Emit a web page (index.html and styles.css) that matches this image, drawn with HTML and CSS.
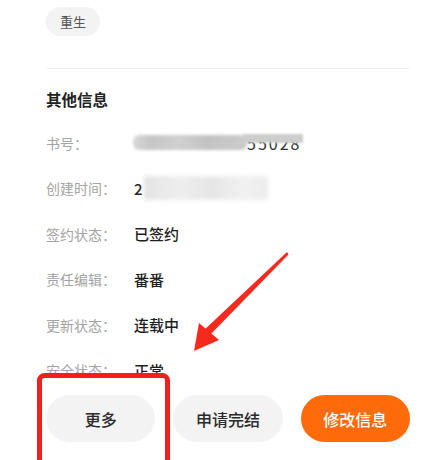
FILE: index.html
```html
<!DOCTYPE html>
<html lang="zh">
<head>
<meta charset="utf-8">
<link rel="stylesheet" href="styles.css">
</head>
<body>
<div class="page">
  <div class="tags"><span class="tag">重生</span></div>
  <div class="divider"></div>
  <h2 class="heading">其他信息</h2>
  <div class="list">
    <div class="row"><span class="label">书号：</span><span class="value blurred-id"><span class="blur-bar bar-id"></span><span class="id-tail">55028<span class="tail-cover"></span></span></span></div>
    <div class="row"><span class="label">创建时间：</span><span class="value">2<span class="blur-bar bar-date"></span></span></div>
    <div class="row"><span class="label">签约状态：</span><span class="value">已签约</span></div>
    <div class="row"><span class="label">责任编辑：</span><span class="value">番番</span></div>
    <div class="row"><span class="label">更新状态：</span><span class="value">连载中</span></div>
    <div class="row"><span class="label">安全状态：</span><span class="value">正常</span></div>
  </div>
  <div class="actions">
    <button class="btn btn-gray">更多</button>
    <button class="btn btn-gray">申请完结</button>
    <button class="btn btn-orange">修改信息</button>
  </div>
</div>
<svg class="annot" width="436" height="460" viewBox="0 0 436 460">
  <rect x="39.5" y="375.5" width="128" height="100" rx="5" fill="none" stroke="#f0201c" stroke-width="5"/>
  <polygon points="287,252 288.5,254.5 208,337 202,332" fill="#f42a1c"/>
  <polygon points="194,351 199,323 219,340" fill="#f42a1c"/>
</svg>
</body>
</html>
```
FILE: styles.css
```css
* { box-sizing: border-box; }
html, body { margin: 0; padding: 0; background: #fff; }
body {
  width: 436px;
  height: 460px;
  overflow: hidden;
  position: relative;
  font-family: "Noto Sans CJK SC", "Noto Sans", sans-serif;
  color: #222;
}
.page { padding: 7px 26px 0 46px; }
.tags { display: flex; }
.tag {
  height: 29px;
  padding: 0 14px;
  border-radius: 15px;
  background: #f3f3f3;
  color: #555;
  font-size: 13px;
  line-height: 29px;
}
.divider { height: 1px; background: #efefef; margin-top: 32px; }
.heading {
  margin: 19px 0 0;
  font-size: 15.5px;
  line-height: 22px;
  font-weight: 600;
  color: #222;
}
.list {
  margin-top: 10px;
  height: 255px;
  overflow: hidden;
}
.row {
  display: flex;
  align-items: center;
  height: 45.5px;
}
.label {
  width: 88px;
  font-size: 14px;
  color: #a3a3a3;
}
.value {
  display: flex;
  align-items: center;
  font-size: 15px;
  color: #1e1e1e;
  font-weight: 500;
}
.blurred-id { margin-left: -1px; }
.blur-bar {
  display: inline-block;
  filter: blur(1.5px);
}
.bar-id {
  width: 114px;
  height: 15px;
  border-radius: 6px;
  background: linear-gradient(90deg, #dadada, #c6c6c6 15%, #d0d0d0 40%, #c3c3c3 65%, #cbcbcb);
}
.id-tail {
  position: relative;
  font-size: 16px;
  line-height: 16px;
  letter-spacing: 2px;
  color: #333;
  font-weight: 400;
}
.tail-cover {
  position: absolute;
  left: -4px; right: -2px; top: -1px; height: 9px;
  background: #cdcdcd;
  filter: blur(1.2px);
}
.bar-date {
  width: 124px;
  height: 24px;
  margin-left: 1px;
  background: linear-gradient(90deg, #e4e4e4, #eeeeee 30%, #e6e6e6 55%, #f1f1f1 80%, #ececec);
  filter: blur(2px);
}
.actions {
  display: flex;
  gap: 18px;
  padding-top: 20px;
}
.btn {
  flex: 1;
  height: 47px;
  border: none;
  border-radius: 24px;
  font-family: inherit;
  font-size: 16px;
  font-weight: 500;
}
.btn-gray { background: #f3f3f3; color: #2a2a2a; }
.btn-orange { background: #ff6a0a; color: #fff; }
.annot { position: absolute; left: 0; top: 0; pointer-events: none; }
```
